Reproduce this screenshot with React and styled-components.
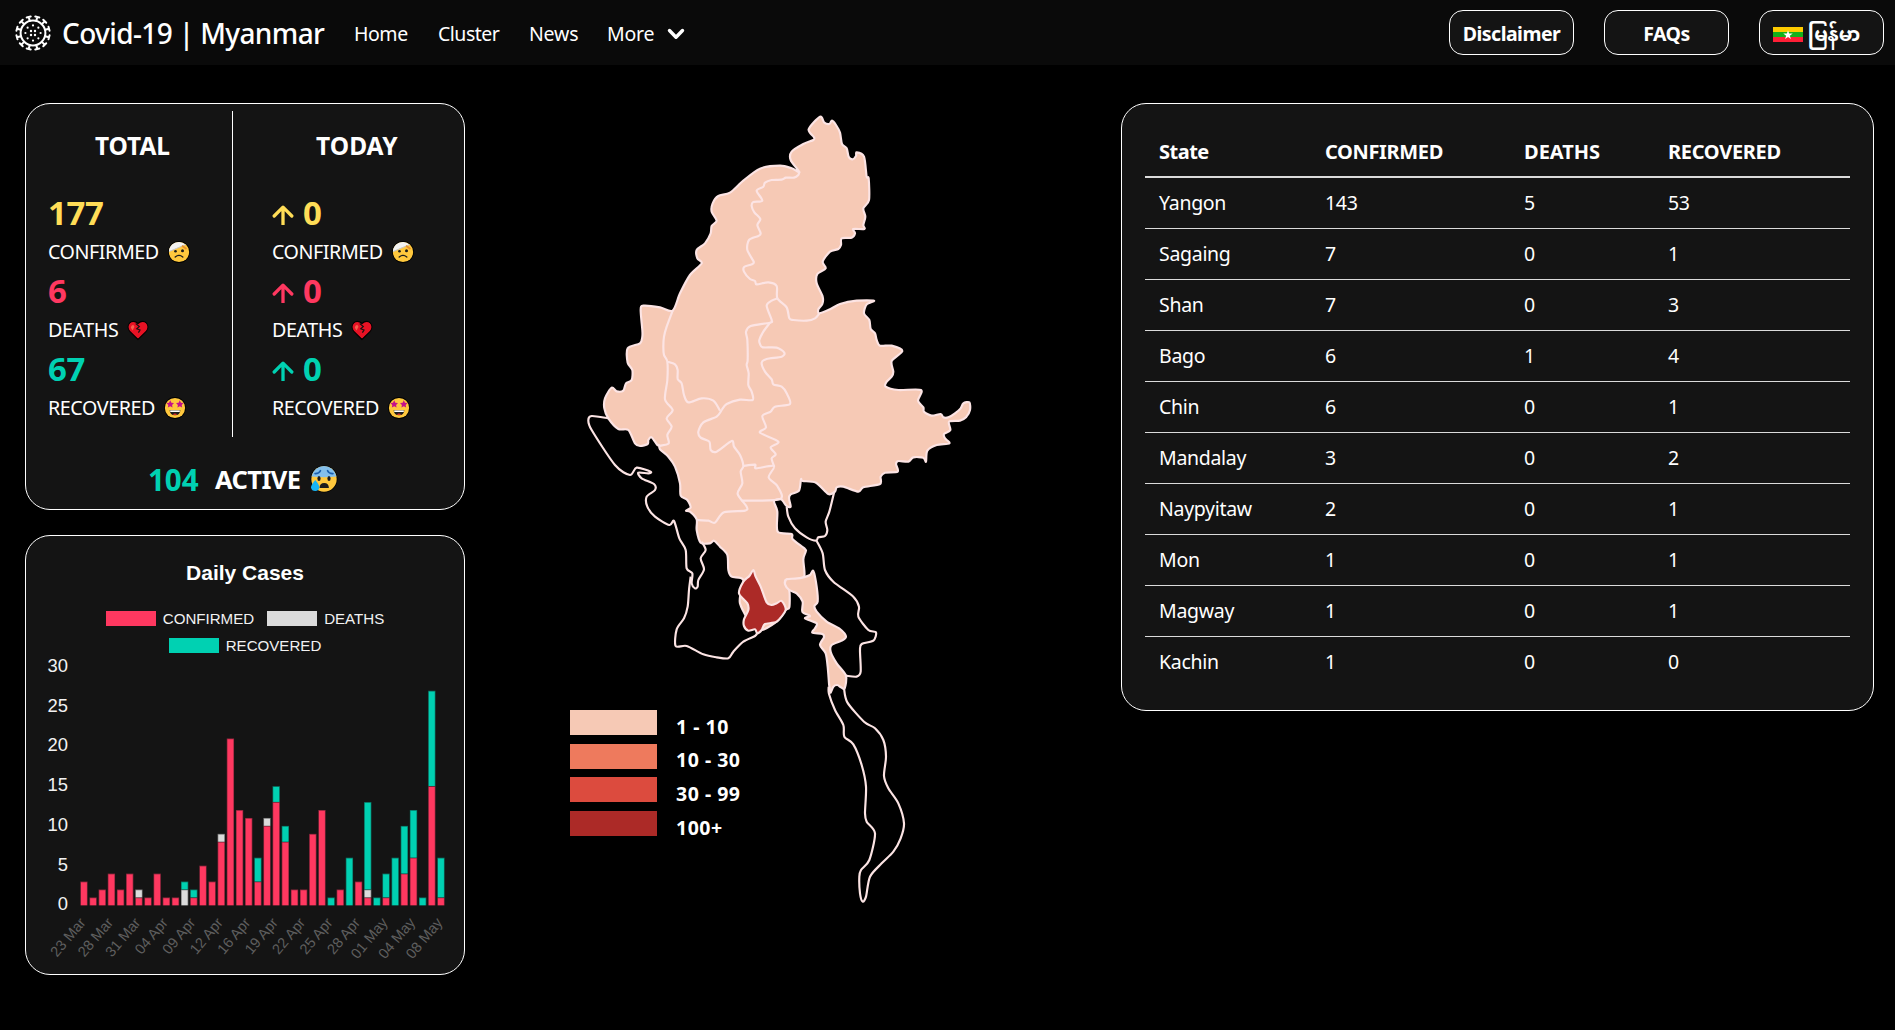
import React from "react";
import styled, { createGlobalStyle } from "styled-components";

const GlobalStyle = createGlobalStyle`
  * { box-sizing: border-box; }
  body {
    margin: 0;
    background: #000;
    color: #fff;
    font-family: "Noto Sans", "Open Sans", sans-serif;
  }
  svg { display: block; flex: none; }
`;

const palette = { yellow: "#ffdd57", red: "#ff3860", green: "#00d1b2", gray: "#dbdbdb" };

/* ---------- navigation ---------- */

const Navbar = styled.nav`
  height: 65px;
  background: #0a0a0a;
  display: flex;
  align-items: center;
  padding: 0 11px 0 14px;
`;

const Brand = styled.div`
  display: flex;
  align-items: center;
  width: 340px;
  gap: 10px;
`;

const BrandName = styled.span`
  font-size: 28px;
  font-weight: 500;
  line-height: 40px;
  padding-top: 1px;
  letter-spacing: ${(p) => p.$track}px;
  white-space: nowrap;
`;

const NavLink = styled.span`
  display: flex;
  align-items: center;
  gap: 13px;
  width: ${(p) => p.$w}px;
  font-size: 19.5px;
  line-height: 26px;
  padding-top: 2px;
  letter-spacing: ${(p) => p.$track || 0}px;
  white-space: nowrap;
`;

const NavActions = styled.div`
  display: flex;
  gap: 30px;
  margin-left: auto;
`;

const NavButton = styled.button`
  width: 125px;
  height: 45px;
  display: flex;
  align-items: center;
  justify-content: center;
  gap: 5px;
  border: 1px solid #fff;
  border-radius: 14px;
  background: #141414;
  color: #fff;
  font: 700 19.5px/26px "Noto Sans", "Noto Sans Myanmar", Padauk, sans-serif;
  letter-spacing: ${(p) => p.$track || 0}px;
  padding: 3px ${(p) => p.$shift || 0}px 0 0;
  white-space: nowrap;
`;

const polar = (r, deg) => {
  const a = (deg * Math.PI) / 180;
  return [r * Math.cos(a), r * Math.sin(a)];
};

const VirusIcon = () => (
  <svg width="38" height="38" viewBox="-19 -19 38 38" fill="none" stroke="#fff" strokeWidth="2">
    <circle r="12.4" />
    {Array.from({ length: 12 }, (_, i) => (
      <g key={i} transform={`rotate(${i * 30 + 15})`}>
        <path d="M12.5 0H16.6M16.6 -2.100V2.100" strokeWidth="2" strokeLinecap="round" />
      </g>
    ))}
    {Array.from({ length: 8 }, (_, i) => {
      const [x, y] = polar(7.6, i * 45);
      return <circle key={i} cx={x} cy={y} r="1.1" fill="#fff" stroke="none" />;
    })}
    {[-2, 2].flatMap((x) => [-2, 2].map((y) => <circle key={`${x}${y}`} cx={x} cy={y} r="1.2" fill="#fff" stroke="none" />))}
  </svg>
);

const Chevron = () => (
  <svg width="18" height="12" viewBox="0 0 18 12">
    <path d="M2.5 2.5 9 9.2l6.500-6.700" fill="none" stroke="#fff" strokeWidth="3.4" strokeLinecap="round" strokeLinejoin="round" />
  </svg>
);

const Flag = () => (
  <svg width="30" height="15" viewBox="0 0 30 15">
    <path fill="#fecb00" d="M0 0h30v5H0z" />
    <path fill="#14b11b" d="M0 5h30v5H0z" />
    <path fill="#ff1f36" d="M0 10h30v5H0z" />
    <path fill="#fff" d="m15 3.200 1.150 3.400h3.600l-2.900 2.100 1.100 3.400L15 10l-2.950 2.100 1.100-3.400-2.900-2.100h3.600z" />
  </svg>
);

/* ---------- page layout ---------- */

const Main = styled.main`
  display: flex;
  align-items: flex-start;
  padding: 38px 21px 0 25px;
`;

const SideColumn = styled.div`
  width: 440px;
  display: flex;
  flex-direction: column;
  gap: 25px;
`;

const Card = styled.section`
  background: #141414;
  border: 1px solid #fff;
  border-radius: 25px;
  height: ${(p) => p.$h}px;
  width: ${(p) => p.$w}px;
`;

/* ---------- totals ---------- */

const StatColumns = styled.div`
  display: flex;
  height: 333px;
  padding-top: 7px;
`;

const StatColumn = styled.div`
  width: ${(p) => p.$w}px;
  padding-left: ${(p) => p.$pad}px;
  border-right: ${(p) => (p.$divided ? "1px solid #fff" : "none")};
`;

const StatHeading = styled.h2`
  margin: 19px 0 30px;
  padding-left: ${(p) => p.$pad}px;
  font-size: 24.5px;
  line-height: 32px;
  letter-spacing: ${(p) => p.$track}px;
`;

const StatValue = styled.div`
  display: flex;
  align-items: center;
  gap: 9px;
  height: 42px;
  font-size: 33px;
  font-weight: 700;
  line-height: 42px;
  letter-spacing: -0.4px;
  color: ${(p) => p.$color};
`;

const StatLabel = styled.div`
  display: flex;
  align-items: center;
  gap: 9px;
  height: 36px;
  font-size: 19.700px;
  line-height: 36px;
  letter-spacing: ${(p) => p.$track}px;
`;

const ActiveRow = styled.div`
  display: flex;
  align-items: center;
  justify-content: flex-start;
  padding-left: 122px;
  height: 84px;
  font-weight: 700;
`;

const ActiveCount = styled.span`
  width: 67px;
  font-size: 29.500px;
  letter-spacing: 0;
  color: ${palette.green};
`;

const ActiveLabel = styled.span`
  width: 95px;
  font-size: 25.5px;
  letter-spacing: -0.6px;
`;

const ArrowUp = () => (
  <svg width="22" height="24" viewBox="0 0 22 24">
    <path d="M11 21.500V5M2.200 13 11 4.200 19.800 13" transform="translate(0 2)" fill="none" stroke="currentColor" strokeWidth="3.300" strokeLinecap="round" strokeLinejoin="round" />
  </svg>
);

const Bandaged = () => (
  <svg width="22" height="22" viewBox="0 0 22 22">
    <circle cx="11" cy="11" r="10.900" fill="#000" />
    <circle cx="11" cy="11" r="10.100" fill="#ffc83d" />
    <path d="M.9 10.600A10.100 10.100 0 0 1 17.500 3.400Z" fill="#f2f2f2" />
    <path d="M1.100 10.600 17.500 3.600" stroke="#c9c9c9" />
    <path d="m14 4.700 4.500 3.300" stroke="#e8912d" strokeWidth="1.800" />
    <circle cx="7.500" cy="10.300" r="1.300" fill="#1c1c1c" />
    <circle cx="14.500" cy="9.800" r="1.500" fill="#1c1c1c" />
    <path d="M7.200 16q3.800-3.200 7.600 0" fill="none" stroke="#1c1c1c" strokeWidth="1.300" strokeLinecap="round" />
  </svg>
);

const BrokenHeart = () => (
  <svg width="22" height="22" viewBox="0 0 22 22">
    <path d="M11 20.500 2.800 12.500C-2 6.500 4.500-1.500 11 4.500 17.500-1.500 24 6.500 19.200 12.500Z" fill="#e81224" stroke="#000" strokeWidth="1.100" />
    <path d="m8.700 4.500 3.600 3-2.500 2.300 3.200 1.200-1.600 2.600" fill="none" stroke="#141414" strokeWidth="1.200" />
    <path d="M3.800 8.500q.3-2.300 2.400-2.700l1.300 2-2 3.700Z" fill="#f4604f" />
  </svg>
);

const starPath = (cx, cy, r) =>
  "M" +
  Array.from({ length: 10 }, (_, i) => {
    const [x, y] = polar(i % 2 ? r * 0.5 : r, i * 36 - 90);
    return `${(cx + x).toFixed(2)} ${(cy + y).toFixed(2)}`;
  }).join("L") +
  "Z";

const StarStruck = () => (
  <svg width="22" height="22" viewBox="0 0 22 22">
    <circle cx="11" cy="11" r="10.900" fill="#000" />
    <circle cx="11" cy="11" r="10.100" fill="#ffc83d" />
    <path d={starPath(6.2, 7.3, 4)} fill="#c4118a" />
    <path d={starPath(15.8, 7.3, 4)} fill="#c4118a" />
    <path d="M5.600 13.200h10.800q-.4 5.100-5.400 5.100t-5.400-5.100z" fill="#1c1c1c" />
    <path d="M6.200 13.400h9.600v1.600H6.200z" fill="#fff" />
    <path d="M8.700 17.300q2.300-1.600 4.600 0-2.300 1.400-4.600 0z" fill="#e8342d" />
  </svg>
);

const Anxious = () => (
  <svg width="28" height="28" viewBox="0 0 28 28">
    <circle cx="14" cy="14" r="13.500" fill="#000" />
    <circle cx="14" cy="14" r="12.700" fill="#ffc83d" />
    <path d="M1.500 11.500A12.700 12.700 0 0 1 26.500 11.500Q14 13 1.500 11.500Z" fill="#83bfec" />
    <path d="M5 8.600q4 .2 5.500-3M23 8.600q-4 .2-5.500-3" fill="none" stroke="#1a5fae" strokeWidth="1.600" strokeLinecap="round" />
    <ellipse cx="9" cy="13.500" rx="1.600" ry="2.500" fill="#1c1c1c" />
    <ellipse cx="19" cy="13.500" rx="1.600" ry="2.500" fill="#1c1c1c" />
    <path d="M9.500 23q.2-5 4.700-5t4.700 5z" fill="#1c1c1c" />
    <path d="M5.300 15Q.8 20.500 1 22.500q.6 3.500 4.300 3.500T9.400 22Q9 19.500 5.300 15Z" fill="#16b4f5" />
  </svg>
);

const stats = [
  { label: "CONFIRMED", track: -0.44, total: 177, color: palette.yellow, Face: Bandaged },
  { label: "DEATHS", track: -0.4, total: 6, color: palette.red, Face: BrokenHeart },
  { label: "RECOVERED", track: -0.42, total: 67, color: palette.green, Face: StarStruck },
];

const StatList = ({ today }) =>
  stats.map(({ label, track, total, color, Face }) => (
    <React.Fragment key={label}>
      <StatValue $color={color}>
        {today && <ArrowUp />}
        {today ? 0 : total}
      </StatValue>
      <StatLabel $track={track}>
        {label}
        <Face />
      </StatLabel>
    </React.Fragment>
  ));

/* ---------- daily cases chart ---------- */

const days = [
  [3], [1], [2], [4], [2], [4], [1, 1], [1], [4], [1], [1], [0, 2, 1], [1, 0, 1], [5], [3], [8, 1], [21], [12], [11],
  [3, 0, 3], [10, 1], [13, 0, 2], [8, 0, 2], [2], [2], [9], [12], [0, 0, 1], [2], [0, 0, 6], [3], [1, 1, 11],
  [0, 0, 1], [1, 0, 3], [0, 0, 6], [4, 0, 6], [6, 0, 6], [0, 0, 1], [15, 0, 12], [1, 0, 5],
];
const dayLabels = [
  "23 Mar", "28 Mar", "31 Mar", "04 Apr", "09 Apr", "12 Apr", "16 Apr", "19 Apr", "22 Apr", "25 Apr", "28 Apr",
  "01 May", "04 May", "08 May",
];
const series = [
  { fill: "#ff3860", edge: "#8a263b" },
  { fill: "#dbdbdb", edge: "#787878" },
  { fill: "#00d1b2", edge: "#0a7363" },
];

const ChartTitle = styled.h3`
  margin: 25px 0 0;
  text-align: center;
  font: 700 21px/24px "Liberation Sans", Arial, sans-serif;
`;

const Legend = styled.div`
  display: flex;
  flex-wrap: wrap;
  justify-content: center;
  gap: 12px 13px;
  margin: 26px 60px 2px;
`;

const LegendItem = styled.div`
  display: flex;
  align-items: center;
  gap: 7px;
  font: 15.100px/15px "Liberation Sans", Arial, sans-serif;
  color: #f2f2f2;
`;

const LegendSwatch = styled.span`
  width: 50px;
  height: 15px;
  background: ${(p) => p.$color};
`;

const ChartText = styled.text`
  font-family: "Liberation Sans", Arial, sans-serif;
  font-size: ${(p) => p.$size}px;
  fill: ${(p) => p.$color};
  text-anchor: end;
`;

const UNIT = 7.95;
const BASE = 250.4;
const PITCH = 9.154;

const BarChart = () => (
  <svg width="438" height="319" viewBox="0 0 438 319">
    {[0, 5, 10, 15, 20, 25, 30].map((v) => (
      <ChartText key={v} $size={18.4} $color="#f2f2f2" x="42" y={BASE + 5 - v * UNIT}>
        {v}
      </ChartText>
    ))}
    {days.map((day, i) => {
      let level = 0;
      return day.map((value, s) => {
        if (!value) return null;
        level += value;
        const x = 54.3 + i * PITCH;
        const y = BASE - level * UNIT;
        return (
          <g key={`${i}-${s}`}>
            <rect x={x} y={y} width="7.3" height={value * UNIT} fill={series[s].edge} />
            <rect x={x + 0.7} y={y + 0.8} width="5.9" height={value * UNIT - 1} fill={series[s].fill} />
          </g>
        );
      });
    })}
    {dayLabels.map((label, i) => (
      <ChartText
        key={label}
        $size={14.6}
        $color="#5f5f5f"
        transform={`translate(${60.3 + i * 3 * PITCH} 268) rotate(-50)`}
      >
        {label}
      </ChartText>
    ))}
  </svg>
);

/* ---------- map ---------- */

// Each outline is a list of [dx, dy, points] chunks, joined and smoothed into one path.
const curve = (chunks, closed) => {
  const pts = chunks.flatMap(([dx, dy, text]) => {
    const n = text.trim().split(/\s+/).map(Number);
    return n.reduce((out, v, i) => (i % 2 ? out : [...out, [v + dx, n[i + 1] + dy]]), []);
  });
  const at = (i) => (closed ? pts[(i + pts.length) % pts.length] : pts[Math.max(0, Math.min(pts.length - 1, i))]);
  const k = 0.14;
  let d = `M${pts[0]}`;
  for (let i = 0; i < (closed ? pts.length : pts.length - 1); i++) {
    const [a, b, c, e] = [at(i - 1), at(i), at(i + 1), at(i + 2)];
    d += `C${b[0] + (c[0] - a[0]) * k} ${b[1] + (c[1] - a[1]) * k} ${c[0] - (e[0] - b[0]) * k} ${c[1] - (e[1] - b[1]) * k} ${c[0]} ${c[1]}`;
  }
  return closed ? d + "Z" : d;
};

const N = [0, 0];
const C = [0, 690];
const D = [180, 1110];
const S = [-60, 1320];

const mainland = curve(
  [
    [...N, "720 50 733 68 748 72 756 62 768 75 780 98 786 132 800 145 806 170 818 178 828 168 830 157 852 170 860 230 866 235 867 300 850 325 856 350 850 375 853 387 820 387 825 400 815 413 785 415 783 435 775 447 750 455 728 485 737 505 712 522 710 550 728 590 727 612 715 628 718 640 750 628 780 612 830 602 882 602 860 613 852 640 868 660 872 687 885 700"],
    [...C, "890 30 900 47 935 47 967 63 935 93 940 125 935 140 920 155 917 170 955 180 1023 180 1014 212 1030 232 1032 245 1055 257 1082 252 1090 262 1105 262 1125 250 1142 235 1150 220 1168 217 1170 240 1158 262 1140 272 1107 275 1111 300 1092 312 1095 325 1108 340 1070 345 1042 362 1038 395 1030 383 1000 382 985 395 955 393 948 402 953 425 915 428 902 440 900 462 850 472 835 485 790 470 770 472 765 485 745 492 708 458 668 453 663 448 657 482 632 493 627 505 632 530 620 528 603 508 582 513 592 545 593 605 635 612 638 628 675 657"],
    [...D, "497 245 490 268 493 318 470 327 440 328 435 340 448 362 448 412 437 420 410 455 352 480 300 400 310 330 275 320 265 300 262 255 240 230 222 212 210 220 182 218 170 180 170 148"],
    [...C, "330 545 318 542 332 532 322 510 302 497 300 460 285 410 265 380 240 358 237 345 232 345 215 322 205 330 203 342 180 348 165 340 145 300 115 297 85 265 73 235 75 205 95 173 110 184 130 182 138 160 155 150 157 120 143 98 143 55 180 40 187 20 187 0"],
    [...N, "182 630 190 617 240 622 278 632 300 580 330 525 365 490 352 475 350 450 375 430 392 400 395 378 410 362 395 335 398 310 415 288 450 278 490 242 540 206 600 197 635 205 658 216 632 180 635 155 670 132 700 120 702 112 686 88"],
  ],
  true
);

const mon = curve(
  [
    [...D, "435 343 440 328 465 326 490 322 510 315 520 303 530 350 533 395 523 408 530 425 560 455 600 477 618 500 605 512 575 525 572 545 590 580 618 617 614 655 603 652 592 645 580 650 572 668 569 655 567 640 563 590 557 550 540 525 552 502 547 492 517 488 525 475 530 460 495 445 510 438 487 425 488 395 470 370 448 360"],
  ],
  true
);

const yangon = curve(
  [
    [...D, "340 300 347 320 362 350 380 397 395 405 410 400 425 393 437 420 410 455 375 462 365 480 352 490 345 478 325 482 312 468 312 448 325 420 322 400 297 370 310 335 328 318"],
  ],
  true
);

const borders = [
  [[...N, "658 216 655 225 642 233 618 233 605 239 575 240 555 248 550 260 530 272 547 302 520 306 515 318 523 337 541 357 532 375 542 400 535 408 507 420 502 450 521 485 515 493 493 500 492 515 510 537 525 543 530 553 565 547 590 558 592 595 620 622 628 655 640 660 680 662 705 655 718 640"]],
  [[...N, "592 595 575 602 560 617 575 660 570 668 512 678 498 695"], [...C, "502 30 503 90 500 105 506 130 505 165 515 185 518 210 480 209 440 222 425 240"]],
  [[...N, "570 668 550 695"], [...C, "538 30 540 42 548 52 590 53 613 68 605 80 560 87 545 98 555 125 575 148 580 163 605 170 620 190 630 222 585 230 572 245 547 258 558 292 540 308 595 335 572 352 587 373 575 385 582 408"]],
  [[...N, "278 632 260 680"], [...C, "252 20 250 50 252 75 262 95 262 150 255 208 278 240 260 265 275 290 262 315 266 340 237 348"]],
  [[...C, "262 95 285 103 293 120 293 147 305 160 312 195 325 217 365 205 400 212 420 242"]],
  [[...C, "425 240 410 260 370 277 355 305 362 323 388 335 392 360 410 365 455 333 462 350 480 375 490 408 482 425 487 460 473 492 500 530 495 542 432 547 405 578 385 572 350 570"]],
  [[...C, "490 408 525 404 528 415 582 408 566 442 592 468 600 508 485 512"]],
  [[...C, "620 530 625 560 645 595 680 622 708 632 715 622 735 618 742 600 737 575 748 545 762 488"]],
  [[...D, "530 213 548 250 555 300 580 335 640 380 657 410 655 440 685 480 708 487 700 512 665 522 660 540 662 605 650 620 618 617"]],
  [
    [...C, "85 265 35 258 25 270 35 300 105 405 150 435 170 413 212 425 205 430 175 428 185 445 222 462 225 480 200 500 202 530 225 560 268 585 282 573"],
    [...D, "118 205 137 240 140 295 157 310 155 340 165 355 173 350 175 330 192 298 182 265 197 240 185 215"],
  ],
  [[...D, "152 320 147 360 143 410 132 445 110 478 107 528 140 528 190 553 230 562 265 565 280 545 310 515 345 498 352 488"]],
  [[...S, "806 440 807 462 825 510 850 555 853 590 880 613 905 675 918 740 915 820 920 845 945 880 928 960 903 990 898 1010 900 1060 908 1085 918 1070 930 1010 965 970 1000 935 1022 895 1032 850 1015 790 985 745 972 708 978 650 970 600 945 565 912 545 862 487 852 445"]],
].map((b) => curve(b, false));

const MapArea = styled.div`
  display: grid;
  margin-left: 105px;
  width: 551px;
`;

const MapSvg = styled.svg`
  grid-area: 1 / 1;
  margin: -3px 0 0 10px;
`;

const MapLegend = styled.div`
  grid-area: 1 / 1;
  align-self: start;
  display: flex;
  flex-direction: column;
  gap: 8.700px;
  margin-top: 607px;
`;

const MapLegendRow = styled.div`
  display: flex;
  align-items: center;
  gap: 19px;
  height: 25px;
`;

const MapSwatch = styled.span`
  width: 87px;
  height: 25px;
  background: ${(p) => p.$color};
`;

const MapRange = styled.span`
  font-size: 19.500px;
  font-weight: 700;
  line-height: 25px;
  letter-spacing: 0.5px;
  padding-top: 7px;
`;

const ranges = [
  ["#f6c9b5", "1 - 10"],
  ["#ee7a5d", "10 - 30"],
  ["#dc4b3e", "30 - 99"],
  ["#ac2a27", "100+"],
];

const MyanmarMap = () => (
  <MapSvg width="400" height="820" viewBox="0 0 1200 2460" stroke="#fce4e4" strokeWidth="6.500" strokeLinejoin="round" fill="none">
    <path d={mainland} fill="#f6c9b5" />
    {borders.map((d, i) => (
      <path key={i} d={d} />
    ))}
    <path d={mon} fill="#f6c9b5" />
    <path d={yangon} fill="#ac2a27" />
  </MapSvg>
);

/* ---------- states table ---------- */

const StateTable = styled.table`
  width: 705px;
  margin: 22px 0 0 23px;
  border-collapse: collapse;
  table-layout: fixed;
  font-size: 19.500px;
`;

const Th = styled.th`
  width: ${(p) => p.$w}px;
  height: 51px;
  padding: 0 14px;
  border-bottom: 2px solid #dbdbdb;
  text-align: left;
  font-size: 20px;
  letter-spacing: ${(p) => p.$track}px;
`;

const Td = styled.td`
  height: 51px;
  padding: 0 14px;
  border-bottom: ${(p) => (p.$last ? "none" : "1px solid #dbdbdb")};
  letter-spacing: -0.3px;
`;

const states = [
  ["Yangon", 143, 5, 53],
  ["Sagaing", 7, 0, 1],
  ["Shan", 7, 0, 3],
  ["Bago", 6, 1, 4],
  ["Chin", 6, 0, 1],
  ["Mandalay", 3, 0, 2],
  ["Naypyitaw", 2, 0, 1],
  ["Mon", 1, 0, 1],
  ["Magway", 1, 0, 1],
  ["Kachin", 1, 0, 0],
];

export default function App() {
  return (
    <>
      <GlobalStyle />
      <Navbar>
        <Brand>
          <VirusIcon />
          <BrandName $track={-0.62}>Covid-19 | Myanmar</BrandName>
        </Brand>
        <NavLink $w={84} $track={-0.45}>Home</NavLink>
        <NavLink $w={91} $track={-0.5}>Cluster</NavLink>
        <NavLink $w={78} $track={-0.2}>News</NavLink>
        <NavLink $w={80} $track={-0.25}>
          More
          <Chevron />
        </NavLink>
        <NavActions>
          <NavButton $track={-0.5}>Disclaimer</NavButton>
          <NavButton $track={-0.5}>FAQs</NavButton>
          <NavButton $shift={10}>
            <Flag />
            မြန်မာ
          </NavButton>
        </NavActions>
      </Navbar>
      <Main>
        <SideColumn>
          <Card $w={440} $h={407}>
            <StatColumns>
              <StatColumn $w={207} $pad={22} $divided>
                <StatHeading $pad={47} $track={-0.1}>TOTAL</StatHeading>
                <StatList />
              </StatColumn>
              <StatColumn $w={231} $pad={39}>
                <StatHeading $pad={44} $track={0.05}>TODAY</StatHeading>
                <StatList today />
              </StatColumn>
            </StatColumns>
            <ActiveRow>
              <ActiveCount>104</ActiveCount>
              <ActiveLabel>ACTIVE</ActiveLabel>
              <Anxious />
            </ActiveRow>
          </Card>
          <Card $w={440} $h={440}>
            <ChartTitle>Daily Cases</ChartTitle>
            <Legend>
              <LegendItem><LegendSwatch $color={palette.red} />CONFIRMED</LegendItem>
              <LegendItem><LegendSwatch $color={palette.gray} />DEATHS</LegendItem>
              <LegendItem><LegendSwatch $color={palette.green} />RECOVERED</LegendItem>
            </Legend>
            <BarChart />
          </Card>
        </SideColumn>
        <MapArea>
          <MyanmarMap />
          <MapLegend>
            {ranges.map(([color, text]) => (
              <MapLegendRow key={text}>
                <MapSwatch $color={color} />
                <MapRange>{text}</MapRange>
              </MapLegendRow>
            ))}
          </MapLegend>
        </MapArea>
        <Card $w={753} $h={608}>
          <StateTable>
            <thead>
              <tr>
                <Th $w={166} $track={-0.5}>State</Th>
                <Th $w={199} $track={-0.35}>CONFIRMED</Th>
                <Th $w={144} $track={0}>DEATHS</Th>
                <Th $w={196} $track={-0.3}>RECOVERED</Th>
              </tr>
            </thead>
            <tbody>
              {states.map((row, r) => (
                <tr key={row[0]}>
                  {row.map((cell, c) => (
                    <Td key={c} $last={r === states.length - 1}>{cell}</Td>
                  ))}
                </tr>
              ))}
            </tbody>
          </StateTable>
        </Card>
      </Main>
    </>
  );
}
